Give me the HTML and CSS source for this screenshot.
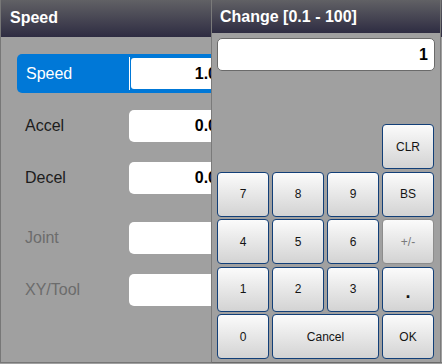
FILE: index.html
```html
<!DOCTYPE html>
<html>
<head>
<meta charset="utf-8">
<link rel="stylesheet" href="styles.css">
</head>
<body>
<div class="screen">
  <div class="panel">
    <div class="header">Speed</div>
    <div class="rows">
      <div class="row row-active">
        <span class="label">Speed</span>
        <span class="sep"></span>
        <div class="field">1.0</div>
      </div>
      <div class="row row-accel">
        <span class="label">Accel</span>
        <div class="field">0.0</div>
      </div>
      <div class="row row-decel">
        <span class="label">Decel</span>
        <div class="field">0.0</div>
      </div>
      <div class="row row-joint disabled">
        <span class="label">Joint</span>
        <div class="field"></div>
      </div>
      <div class="row row-xy disabled">
        <span class="label">XY/Tool</span>
        <div class="field"></div>
      </div>
    </div>
  </div>

  <div class="dialog">
    <div class="dheader">Change [0.1 - 100]</div>
    <div class="dinput">1</div>
    <div class="keypad">
      <button class="key k-clr">CLR</button>
      <button class="key">7</button>
      <button class="key">8</button>
      <button class="key">9</button>
      <button class="key">BS</button>
      <button class="key">4</button>
      <button class="key">5</button>
      <button class="key">6</button>
      <button class="key key-off">+/-</button>
      <button class="key">1</button>
      <button class="key">2</button>
      <button class="key">3</button>
      <button class="key key-dot">.</button>
      <button class="key">0</button>
      <button class="key k-cancel">Cancel</button>
      <button class="key">OK</button>
    </div>
  </div>
</div>
</body>
</html>
```
FILE: styles.css
```css
html, body {
  margin: 0;
  padding: 0;
  background: #a0a0a0;
}
.screen {
  position: relative;
  width: 442px;
  height: 364px;
  overflow: hidden;
  font-family: "Liberation Sans", Arial, sans-serif;
}
.panel {
  width: 441px;
  height: 362px;
  border-left: 1px solid #777;
  border-bottom: 1px solid #777;
  background: #a0a0a0;
}
.header {
  height: 37px;
  line-height: 35px;
  padding-left: 9px;
  color: #fff;
  font-weight: bold;
  font-size: 16px;
  background: linear-gradient(#616165, #2e2c42);
}
.rows {
  padding-top: 17px;
  display: flex;
  flex-direction: column;
}
.row {
  display: flex;
  align-items: center;
  height: 32px;
  margin-left: 16px;
}
.row .label {
  box-sizing: border-box;
  width: 112px;
  padding-left: 8px;
  font-size: 16px;
  color: #1c1c1c;
}
.row .field {
  width: 88px;
  height: 32px;
  line-height: 32px;
  background: #fff;
  border-radius: 5px 0 0 5px;
  text-align: right;
  padding-right: 6px;
  font-weight: bold;
  font-size: 16px;
  color: #000;
}
.row-active {
  height: 39px;
  width: 300px;
  background: #0078d7;
  border-radius: 5px;
}
.row-active .label {
  color: #fff;
  width: 112px;
  padding-left: 9px;
}
.row-active .sep {
  width: 1px;
  height: 33px;
  background: #fff;
  margin-right: 1px;
}
.row-active .field {
  height: 31px;
  line-height: 31px;
  width: 86px;
  border-radius: 3px 0 0 3px;
}
.row-accel { margin-top: 17px; }
.row-decel { margin-top: 20px; }
.row-joint { margin-top: 28px; }
.row-xy { margin-top: 20px; }
.disabled .label { color: #6c6c6c; }

.dialog {
  position: absolute;
  left: 211px;
  top: 0;
  width: 228px;
  height: 362px;
  background: #a0a0a0;
  border-left: 1px solid #7a7a7a;
  border-right: 1px solid #7a7a7a;
  border-bottom: 1px solid #6a6a6a;
  display: flex;
  flex-direction: column;
}
.dheader {
  height: 33px;
  line-height: 33px;
  padding-left: 8px;
  color: #fff;
  font-weight: bold;
  font-size: 16px;
  background: linear-gradient(#616165, #2e2c42);
}
.dinput {
  margin: 5px 5px 0 5px;
  height: 31px;
  line-height: 31px;
  background: #fff;
  border: 1px solid #6a6a6a;
  border-radius: 5px;
  text-align: right;
  padding-right: 6px;
  font-weight: bold;
  font-size: 16px;
  color: #000;
}
.keypad {
  margin: 53px 0 0 5px;
  display: grid;
  grid-template-columns: repeat(4, 52px);
  grid-auto-rows: 45px;
  column-gap: 3px;
  row-gap: 2.5px;
}
.key {
  margin: 0;
  padding: 0;
  border: 1px solid #123f78;
  border-radius: 4px;
  background: linear-gradient(#fbfbfb, #d3d3d3);
  font-family: "Liberation Sans", Arial, sans-serif;
  font-size: 12px;
  color: #141414;
}
.k-clr { grid-column: 4; }
.k-cancel { grid-column: span 2; }
.key-off {
  border-color: #8c8c8c;
  color: #7a7a7a;
}
.key-dot {
  font-size: 18px;
  font-weight: bold;
  padding-top: 6px;
}
```
